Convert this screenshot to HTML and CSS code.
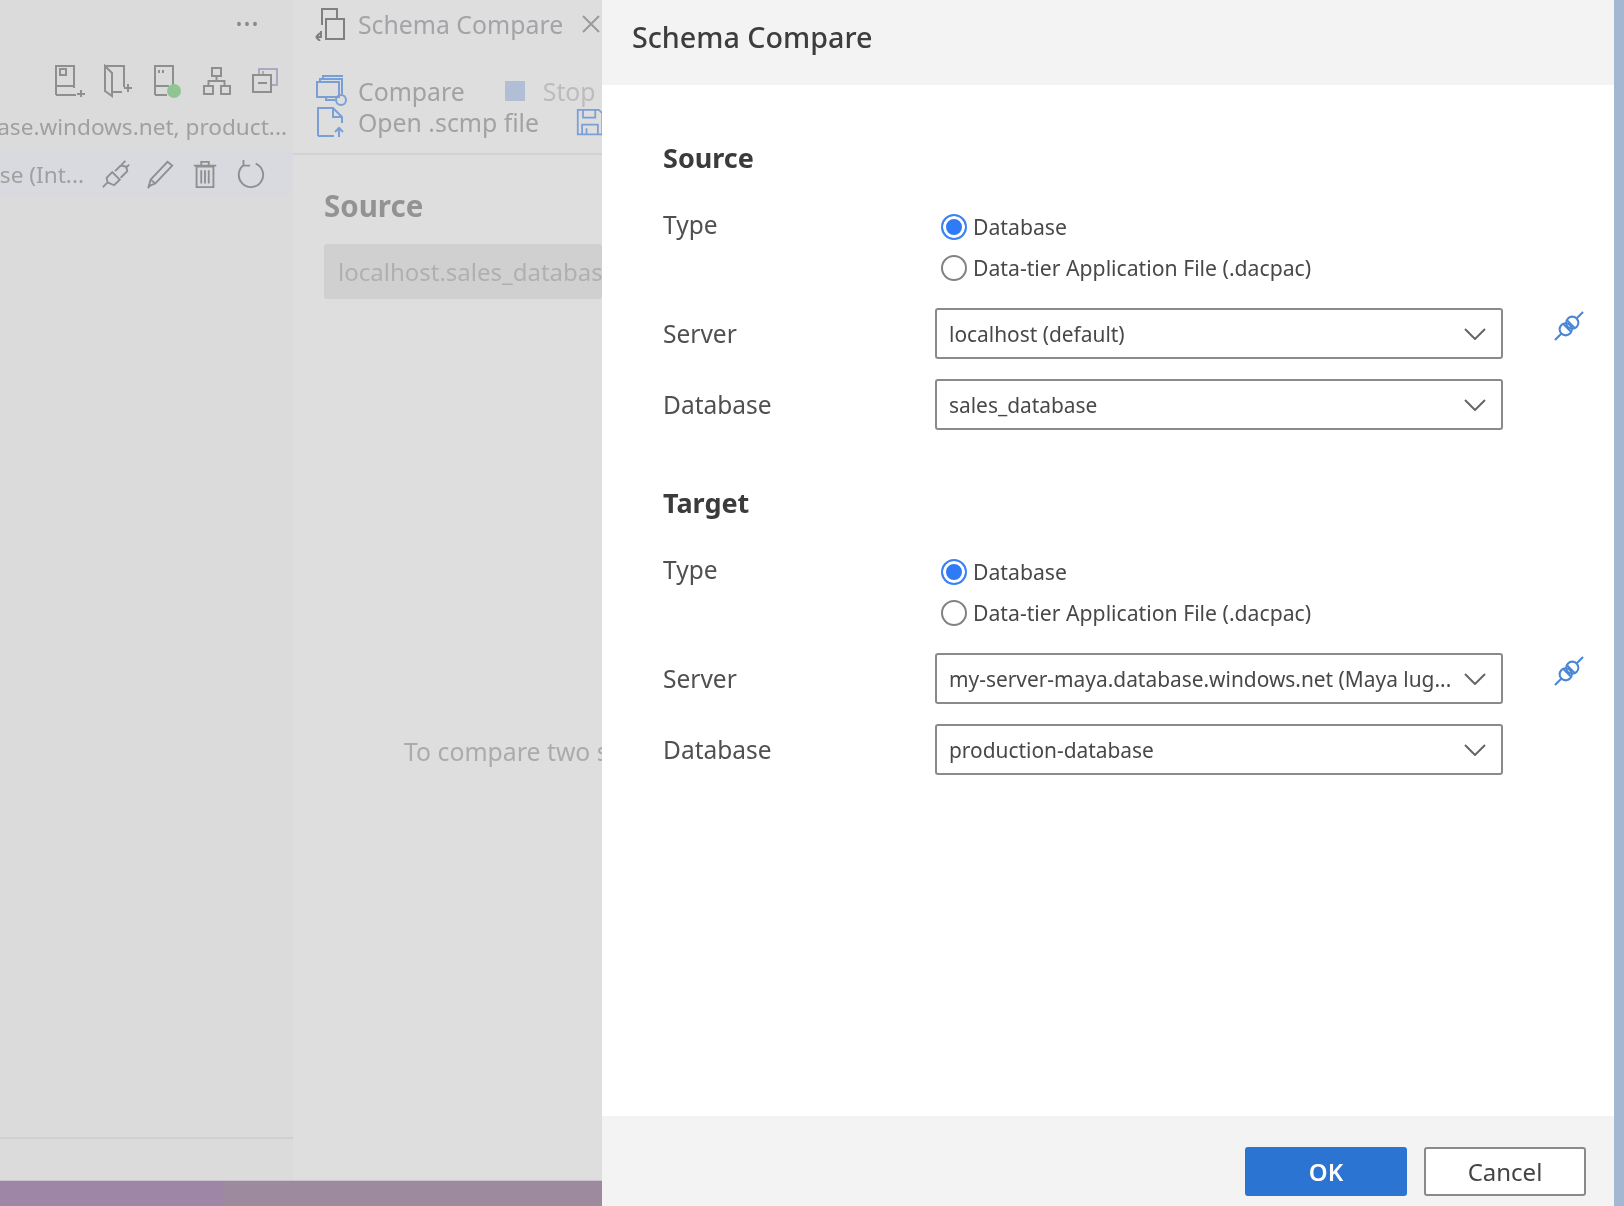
FILE: index.html
```html
<!DOCTYPE html>
<html lang="en">
  <head>
    <meta charset="UTF-8" />
    <title>Schema Compare</title>
    <link rel="stylesheet" href="styles.css">
  </head>
  <body>
    <div class="backdrop">
      <div class="workbench">
        <aside class="sidebar">
          <div class="more">&middot;&middot;&middot;</div>
          <div class="side-icons">
            <svg viewBox="0 0 32 34"><path d="M1 31V2h18v22M1 22h18M1 31h20M5 5h6v6H5zM26 26v7M22 30h8"/></svg>
            <svg viewBox="0 0 32 34"><path d="M2 2h19v21M2 2v25l7 5V9zM2 2l7 7M9 28h10M25 20v8M21 24h8"/></svg>
            <svg viewBox="0 0 32 34"><path d="M3 31V2h18v20M3 22h14M3 31h12M7 6v3M11 6v3"/><circle class="dot" cx="22" cy="27" r="7"/></svg>
            <svg viewBox="0 0 32 34"><path d="M11 4h9v8h-9zM3 22h9v8H3zM20 22h9v8h-9zM15.500 12v5M7.500 22v-5h16v5"/></svg>
            <svg viewBox="0 0 32 34"><path class="tint" d="M10 10V5h18v16h-6"/><path class="tint" d="M14 10V7"/><path d="M4 11h18v17H4zM9 19h9"/></svg>
          </div>
          <div class="conn-name"><span>my-server-maya.database.windows.net, product...</span></div>
          <div class="conn-row">
            <span class="conn-text">sales_database (Int...</span>
            <svg viewBox="0 0 32 32"><path d="M2 30l5-5M7 25l-1-5 6-6 8 8-6 6zM15 13l6-6 6 1 1 5-7 7M22 6l4-4M26 10l4-4"/></svg>
            <svg viewBox="0 0 32 32"><path d="M6 22L24 3l5 4L11 26l-7 3zM6 22l5 4M3 31l3-3"/></svg>
            <svg viewBox="0 0 32 32"><path d="M7 8h18v22H7zM4 7h24M12 7V3h8v4M12 12v14M16 12v14M20 12v14"/></svg>
            <svg viewBox="0 0 32 32"><path d="M9 6a13 13 0 1 0 12 -1M8 1v6h7"/></svg>
          </div>
          <div class="side-bottom"></div>
        </aside>
        <main class="editor">
          <div class="tab">
            <svg class="tab-icon" viewBox="0 0 32 34"><path d="M8 18V2h15v10M12 12h18v20H12zM7 24v6H2M2 30l4-4M2 30l4 4"/></svg>
            <span class="tab-title">Schema Compare</span>
            <svg class="tab-close" viewBox="0 0 18 18"><path d="M1 1l16 16M17 1L1 17"/></svg>
          </div>
          <div class="toolbar">
            <div class="tool-row">
              <svg class="blue" viewBox="0 0 32 32"><path d="M2 7h22v15H2zM5 7V4h22v15M8 4V1h20M20 25h-9v-3"/><circle cx="26" cy="25" r="5"/></svg>
              <span class="tool-label">Compare</span>
              <span class="stop-box"></span>
              <span class="tool-label off">Stop</span>
            </div>
            <div class="tool-row">
              <svg class="blue" viewBox="0 0 32 32"><path d="M3 30V2h15l9 9v6M18 2v9h9M3 30h16M24 31v-9M20 26l4-4 4 4"/></svg>
              <span class="tool-label">Open .scmp file</span>
              <svg class="blue save" viewBox="0 0 32 32"><path d="M2 2h24l4 4v24H2zM8 2v9h14V2M7 30V19h18v11M12 23v7"/></svg>
            </div>
          </div>
          <div class="editor-body">
            <div class="ghost-title">Source</div>
            <div class="ghost-input">localhost.sales_database</div>
            <div class="ghost-hint">To compare two s</div>
          </div>
        </main>
      </div>
      <div class="statusbar"><div class="status-left"></div></div>
    </div>

    <section class="dialog">
      <header class="dialog-head">Schema Compare</header>
      <div class="dialog-body">
        <h2>Source</h2>
        <div class="type-row">
          <div class="label type-label">Type</div>
          <div class="radios">
            <div class="radio-row"><span class="radio on"></span>Database</div>
            <div class="radio-row"><span class="radio"></span>Data-tier Application File (.dacpac)</div>
          </div>
        </div>
        <div class="row">
          <div class="label">Server</div>
          <div class="select"><span>localhost (default)</span><svg viewBox="0 0 22 12"><path d="M1 1l10 10L21 1"/></svg></div>
          <svg class="plug" viewBox="0 0 32 32"><path d="M1 31l7-7M24 8l7-7M10 14l8 8M14 10l8 8"/><circle cx="12.500" cy="19.500" r="6.500"/><circle cx="19.500" cy="12.500" r="6.500"/></svg>
        </div>
        <div class="row">
          <div class="label">Database</div>
          <div class="select"><span>sales_database</span><svg viewBox="0 0 22 12"><path d="M1 1l10 10L21 1"/></svg></div>
        </div>

        <h2 class="second">Target</h2>
        <div class="type-row">
          <div class="label type-label">Type</div>
          <div class="radios">
            <div class="radio-row"><span class="radio on"></span>Database</div>
            <div class="radio-row"><span class="radio"></span>Data-tier Application File (.dacpac)</div>
          </div>
        </div>
        <div class="row">
          <div class="label">Server</div>
          <div class="select"><span>my-server-maya.database.windows.net (Maya lug...</span><svg viewBox="0 0 22 12"><path d="M1 1l10 10L21 1"/></svg></div>
          <svg class="plug" viewBox="0 0 32 32"><path d="M1 31l7-7M24 8l7-7M10 14l8 8M14 10l8 8"/><circle cx="12.500" cy="19.500" r="6.500"/><circle cx="19.500" cy="12.500" r="6.500"/></svg>
        </div>
        <div class="row">
          <div class="label">Database</div>
          <div class="select"><span>production-database</span><svg viewBox="0 0 22 12"><path d="M1 1l10 10L21 1"/></svg></div>
        </div>
      </div>
      <footer class="dialog-foot">
        <button class="btn primary">OK</button>
        <button class="btn">Cancel</button>
      </footer>
    </section>
    <div class="edge"></div>
  </body>
</html>
```
FILE: styles.css
```css
html,
body {
  height: 100%;
}

body {
  margin: 0;
  display: flex;
  overflow: hidden;
  font-family: "Noto Sans", "Open Sans", sans-serif;
  color: #444;
  background: #fff;
}

svg {
  fill: none;
  stroke: #8f8f8f;
  stroke-width: 2;
  flex: none;
}

.backdrop {
  width: 602px;
  flex: none;
  display: flex;
  flex-direction: column;
  filter: blur(0.7px);
}

.workbench {
  flex: 1;
  display: flex;
  min-height: 0;
}

/* left panel behind the dialog */
.sidebar {
  width: 293px;
  flex: none;
  display: flex;
  flex-direction: column;
  background: #dbdbdb;
  color: #a0a0a0;
  font-size: 22.600px;
}

.more {
  height: 50px;
  padding-right: 34px;
  text-align: right;
  font-size: 30px;
  line-height: 48px;
  color: #8a8a8a;
}

.side-icons {
  display: flex;
  justify-content: flex-end;
  gap: 16px;
  padding: 14px 12px 0 0;
  height: 34px;
}

.side-icons svg {
  width: 32px;
  height: 34px;
}

.side-icons svg:nth-child(2),
.side-icons svg:nth-child(3) {
  margin-right: 1px;
}

.side-icons .dot {
  fill: #8fc593;
  stroke: none;
}

.side-icons .tint {
  stroke: #a9a9c4;
}

.conn-name {
  display: flex;
  justify-content: flex-end;
  overflow: hidden;
  white-space: nowrap;
  height: 34px;
  margin-top: 12px;
  padding-right: 6px;
  line-height: 34px;
}

.conn-row {
  display: flex;
  align-items: center;
  justify-content: flex-end;
  gap: 14.500px;
  height: 46px;
  margin-top: 7px;
  padding-right: 27px;
  overflow: hidden;
  white-space: nowrap;
  background: #d8dae0;
}

.conn-row svg {
  width: 30px;
  height: 30px;
}

.conn-row svg:last-child {
  margin-left: 2px;
}

.conn-text {
  margin-right: 2px;
}

.side-bottom {
  margin-top: auto;
  height: 41px;
  border-top: 2px solid #d0d0d0;
}

/* editor behind the dialog */
.editor {
  flex: 1;
  min-width: 0;
  overflow: hidden;
  display: flex;
  flex-direction: column;
  background: #dedede;
  color: #a2a2a2;
  font-size: 24.800px;
}

.tab {
  height: 48px;
  display: flex;
  align-items: center;
  padding-left: 21px;
  white-space: nowrap;
}

.tab-icon {
  width: 32px;
  height: 34px;
  stroke: #808080;
}

.tab-title {
  margin-left: 12px;
  color: #a3a3a8;
}

.tab-close {
  width: 18px;
  height: 18px;
  margin-left: 19px;
  stroke: #9a9a9a;
}

.toolbar {
  height: 78px;
  padding: 27px 0 0 22px;
  border-bottom: 2px solid #d2d2d2;
}

.tool-row {
  height: 31px;
  display: flex;
  align-items: center;
  white-space: nowrap;
}

.tool-row svg {
  width: 32px;
  height: 32px;
}

.blue {
  stroke: #7a9fd6;
}

.tool-label {
  margin-left: 11px;
}

.tool-label.off {
  margin-left: 18px;
  color: #bcbcbc;
}

.stop-box {
  width: 20px;
  height: 20px;
  margin-left: 40px;
  background: #b1bfd6;
}

.tool-row .save {
  width: 28px;
  height: 28px;
  margin-left: 37px;
}

.editor-body {
  padding: 31px 0 0 31px;
  white-space: nowrap;
}

.ghost-title {
  font-size: 29.500px;
  font-weight: 700;
  line-height: 40px;
  color: #939393;
}

.ghost-input {
  height: 55px;
  margin-top: 18px;
  padding-left: 14px;
  font-size: 24px;
  line-height: 56px;
  border-radius: 3px;
  background: #d0d0d0;
  color: #b0b0b0;
}

.ghost-hint {
  margin: 435px 0 0 80px;
  line-height: 34px;
  color: #ababab;
}

.statusbar {
  height: 25px;
  flex: none;
  background: #9e8a9f;
  border-top: 1px solid #c9c3cb;
}

.status-left {
  width: 224px;
  height: 100%;
  background: #9d86a6;
}

/* the dialog */
.dialog {
  width: 1012px;
  flex: none;
  display: flex;
  flex-direction: column;
  background: #fff;
  filter: blur(0.4px);
}

.dialog-head {
  height: 85px;
  flex: none;
  padding-left: 30px;
  font-size: 28.700px;
  font-weight: 500;
  line-height: 74px;
  color: #3d3d3d;
  background: #f3f3f4;
}

.dialog-body {
  flex: 1;
  padding: 58px 0 0 61px;
}

h2 {
  margin: 0;
  font-size: 27px;
  font-weight: 700;
  line-height: 30px;
  color: #3b3b3b;
}

h2.second {
  margin-top: 58px;
}

.label {
  width: 272px;
  flex: none;
  font-size: 24.500px;
  color: #505050;
}

.type-row {
  display: flex;
  margin-top: 33px;
}

.type-label {
  line-height: 38px;
}

.radio-row {
  height: 41px;
  display: flex;
  align-items: center;
  font-size: 21.200px;
  color: #484848;
}

.radio {
  width: 26px;
  height: 26px;
  box-sizing: border-box;
  margin: 0 6px;
  border: 2px solid #828282;
  border-radius: 50%;
  background: #fff;
}

.radio.on {
  border-color: #3b82f6;
  background: #2f7bf5;
  box-shadow: inset 0 0 0 3px #fff;
}

.row {
  display: flex;
  align-items: center;
  margin-top: 20px;
  height: 51px;
}

.select {
  width: 568px;
  height: 51px;
  flex: none;
  box-sizing: border-box;
  display: flex;
  align-items: center;
  justify-content: space-between;
  padding: 0 15px 0 12px;
  border: 2px solid #8a8a8a;
  border-radius: 3px;
  font-size: 20.900px;
  color: #484848;
  white-space: nowrap;
}

.select svg {
  width: 22px;
  height: 12px;
  stroke: #666;
}

.plug {
  width: 30px;
  height: 30px;
  margin: -16px 0 0 51px;
  stroke: #4a86d8;
  stroke-width: 2.200;
}

.dialog-foot {
  height: 90px;
  flex: none;
  box-sizing: border-box;
  display: flex;
  justify-content: flex-end;
  gap: 17px;
  padding: 31px 28px 0 0;
  background: #f3f3f4;
}

.btn {
  width: 162px;
  height: 49px;
  border: 2px solid #8a8a8a;
  border-radius: 3px;
  background: #fff;
  font-family: inherit;
  font-size: 24px;
  color: #444;
}

.btn.primary {
  border-color: #2b74d2;
  background: #2b74d2;
  font-weight: 600;
  color: #fff;
}

.edge {
  flex: 1;
  background: #a3b7d3;
}
```
